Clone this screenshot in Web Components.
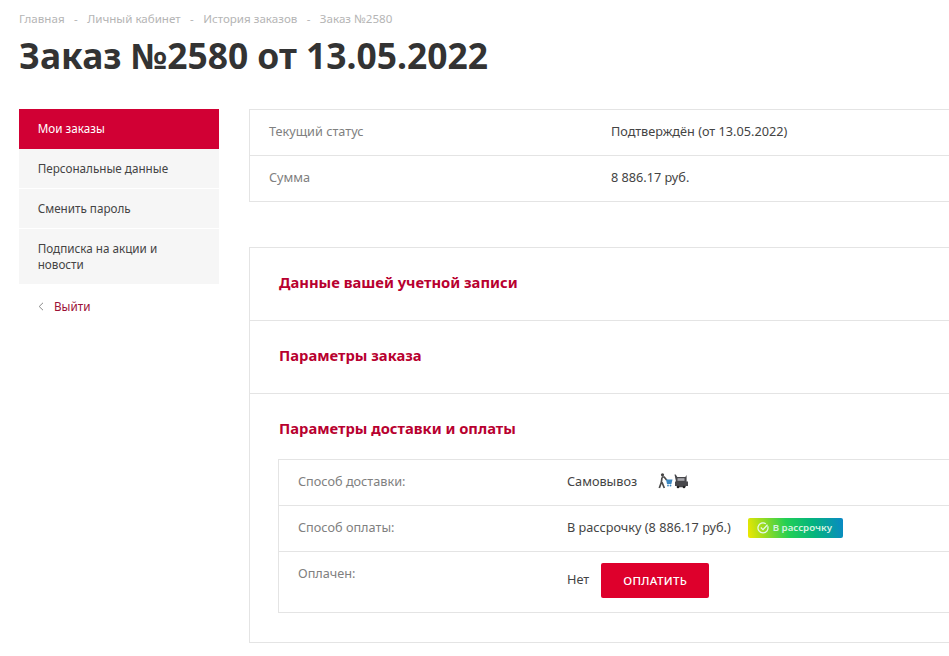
<!DOCTYPE html>
<html lang="ru"><head><meta charset="utf-8"><title>Заказ</title>
<style>
html,body{margin:0;padding:0;background:#fff;overflow:hidden;height:100%}
body{font-family:"Noto Sans","Open Sans",sans-serif;color:#333;width:949px}
</style></head><body>
<order-page></order-page>
<template id="t-page">
<style>
:host{display:block;width:1000px;padding:0 0 0 19px;box-sizing:border-box}
.cols{display:flex;gap:30px;align-items:flex-start;margin-top:32px}
h1{margin:0;font:700 35.42px/44px "Noto Sans",sans-serif;color:#333;padding-top:7px}
.main{width:740px;display:flex;flex-direction:column;gap:45px}
</style>
<bread-crumbs></bread-crumbs>
<h1>Заказ №2580 от 13.05.2022</h1>
<div class="cols">
<side-menu></side-menu>
<div class="main">
<info-table></info-table>
<order-sections></order-sections>
</div>
</div>
</template>
<template id="t-bread">
<style>
:host{display:flex;gap:9.4px;font:11.6px/14px "Noto Sans",sans-serif;color:#b5b5b5;padding-top:12px}
</style>
<span>Главная</span><span>-</span><span>Личный кабинет</span><span>-</span><span>История заказов</span><span>-</span><span>Заказ №2580</span>
</template>
<template id="t-menu">
<style>
:host{display:block;width:200px;flex:none;font:11.7px/16px "Noto Sans",sans-serif}
a{display:block;padding:11px 19px 12px 18.7px;background:#f6f6f6;color:#444;margin-bottom:1px}
a.on{background:#d10034;color:#fff;padding:11px 19px 13px 18.7px;margin:0}
a.tall{margin:0}
.out{display:flex;gap:10px;align-items:center;padding:14px 19px;color:#9c1036}
svg{width:6px;height:9px;flex:none}
</style>
<a class="on">Мои заказы</a><a>Персональные данные</a><a>Сменить пароль</a><a class="tall">Подписка на акции и новости</a>
<div class="out"><svg viewBox="0 0 6 9"><path d="M5 .8 1.2 4.5 5 8.2" fill="none" stroke="#888" stroke-width="1"/></svg><span>Выйти</span></div>
</template>
<template id="t-info">
<style>
:host{display:block;border:1px solid #e4e4e4;font:12.7px/16px "Noto Sans",sans-serif}
.r{display:flex;height:45px;box-sizing:border-box;padding:0 0 4px 19px;align-items:center}
.r+.r{border-top:1px solid #e4e4e4;height:46px}
.k{width:342px;color:#808080}.v{color:#444}
</style>
<div class="r"><div class="k">Текущий статус</div><div class="v">Подтверждён (от 13.05.2022)</div></div>
<div class="r"><div class="k">Сумма</div><div class="v">8 886.17 руб.</div></div>
</template>
<template id="t-sec">
<style>
:host{display:block;border:1px solid #e4e4e4}
h3{margin:0;font:700 14.75px/20px "Noto Sans",sans-serif;color:#b8002f;padding:24px 29px 28px}
.b{border-bottom:1px solid #e4e4e4}
.body{margin:0 0 29px 28px;border:1px solid #e4e4e4;font:12.7px/16px "Noto Sans",sans-serif}
.r{display:flex;height:45px;box-sizing:border-box;padding:0 0 4px 19px;align-items:center}
.r+.r{border-top:1px solid #e4e4e4;height:46px}
.k{width:269px;color:#808080}.v{color:#444;display:flex;align-items:center}
.r.last{height:61px;padding-bottom:0;align-items:flex-start}
.last .k{padding-top:13px}.last .v{padding-top:11px}
.last span{margin-bottom:4px}
.ic{margin-left:21px;display:block}
.badge{margin:2px 0 0 17px;width:95px;height:20px;border-radius:2px;background:linear-gradient(78deg,#f0e800 0,#a4dd1c 16%,#22cf55 42%,#04b47e 68%,#0a88c6 100%);display:flex;align-items:center;box-sizing:border-box;padding-left:9px;gap:4px;color:#d6f3e2;font:600 9.7px/10px "Noto Sans",sans-serif}
.pay{margin-left:12px;width:108px;height:35px;background:#de002c;border:0;border-radius:2px;color:#fff;font:500 11.6px/35px "Noto Sans",sans-serif;letter-spacing:.3px;text-align:center;padding:0}
</style>
<div class="b"><h3>Данные вашей учетной записи</h3></div>
<div class="b"><h3>Параметры заказа</h3></div>
<h3 style="padding-bottom:21px">Параметры доставки и оплаты</h3>
<div class="body">
<div class="r"><div class="k">Способ доставки:</div><div class="v">Самовывоз
<svg class="ic" width="31" height="16" viewBox="0 0 31 16"><circle cx="4.5" cy="1.8" r="1.6" fill="#444"/><path d="M3.8 4h2.4l2.6 3.2M4 4.5 3.3 9.5 1.3 15M4 9.2 6.3 15" fill="none" stroke="#4a4a4a" stroke-width="1.7"/><path d="M8 6.5h6.5L13.4 11H9z" fill="#3a86c0"/><circle cx="10" cy="12.5" r=".9" fill="#3a86c0"/><circle cx="12.5" cy="12.5" r=".9" fill="#3a86c0"/><path d="M16.5 1.5h1.2l1.6 2.5h8l1.3-2v6.5h1.4V13h-1.9l-1 1.3h-7.6l-1-1.3H17V8.5h1z" fill="#47474b"/><rect x="19.5" y="5.2" width="7" height="2.6" fill="#a8a8ae"/><circle cx="20" cy="14" r="1.3" fill="#222"/><circle cx="26" cy="14" r="1.3" fill="#222"/></svg></div></div>
<div class="r"><div class="k">Способ оплаты:</div><div class="v">В рассрочку (8 886.17 руб.)
<div class="badge"><svg width="12" height="12" viewBox="0 0 12 12"><path d="M10.7 4.3A5 5 0 1 1 8.8 1.8" fill="none" stroke="#e4f8ea" stroke-width="1.3"/><path d="M3.8 5.5 6 7.6 10.5 2.8" fill="none" stroke="#e4f8ea" stroke-width="1.3"/></svg><span>В рассрочку</span></div></div></div>
<div class="r last"><div class="k">Оплачен:</div><div class="v"><span>Нет</span><button class="pay">ОПЛАТИТЬ</button></div></div>
</div>
</template>
<script>
const def=(n,t)=>customElements.define(n,class extends HTMLElement{constructor(){super();this.attachShadow({mode:"open"}).appendChild(document.getElementById(t).content.cloneNode(true))}});
def("bread-crumbs","t-bread");def("side-menu","t-menu");def("info-table","t-info");def("order-sections","t-sec");def("order-page","t-page");
</script>
</body></html>
